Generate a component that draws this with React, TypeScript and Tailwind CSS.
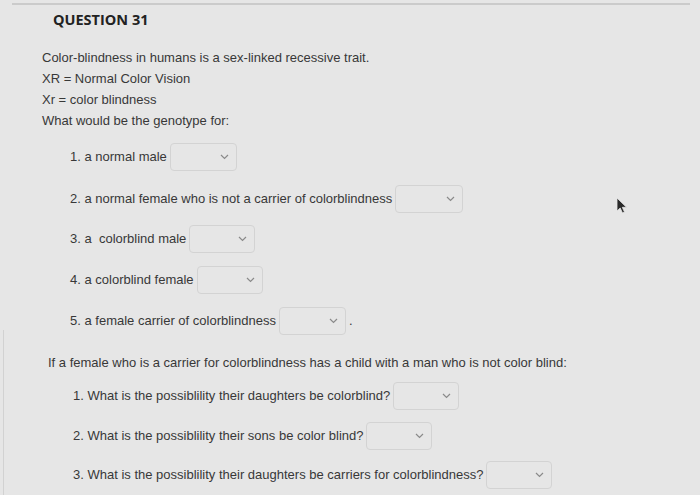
const bodyFont = { fontFamily: '"Liberation Sans", Arial, sans-serif' }

const Dropdown = ({ w = 67 }: { w?: number }) => (
  <span
    className="inline-flex h-[28px] items-center justify-end rounded-[4px] border border-[#d3d3d3] pr-[7px] align-middle"
    style={{ width: w }}>
    <svg width="9" height="6" viewBox="0 0 9 6" fill="none">
      <path d="M1 1l3.5 3.5L8 1" stroke="#8a8a8a" strokeWidth="1.2" />
    </svg>
  </span>
)

const Row = ({
  label,
  w,
  after,
  className
}: {
  label: string
  w?: number
  after?: string
  className: string
}) => (
  <div className={"flex items-center gap-[3px] " + className}>
    <span className="whitespace-pre">{label}</span>
    <Dropdown w={w} />
    {after && <span>{after}</span>}
  </div>
)

const App = () => {
  return (
    <div
      className="relative h-[495px] w-[700px] overflow-hidden bg-[#e6e6e6] text-[13px] text-[#383838]"
      style={bodyFont}>
      <div className="ml-[12px] mr-[10px] mt-[3px] h-[2px] bg-[#cbcbcb]" />
      <div className="absolute bottom-0 left-[3px] top-[330px] w-px bg-[#d2d2d2]" />

      <h1
        className="ml-[53px] mt-[4px] text-[14.5px] font-bold leading-[22px] text-[#222]"
        style={{ fontFamily: '"Open Sans", sans-serif' }}>
        QUESTION 31
      </h1>

      <div className="ml-[42px] mt-[16px] leading-[21px]">
        <p>Color-blindness in humans is a sex-linked recessive trait.</p>
        <p>XR = Normal Color Vision</p>
        <p>Xr = color blindness</p>
        <p>What would be the genotype for:</p>
      </div>

      <div className="ml-[70px]">
        <Row className="mt-[12px]" label="1. a normal male" />
        <Row
          className="mt-[14px]"
          label="2. a normal female who is not a carrier of colorblindness"
          w={68}
        />
        <Row className="mt-[12px]" label="3. a  colorblind male" w={66} />
        <Row className="mt-[13px]" label="4. a colorblind female" w={66} />
        <Row
          className="mt-[13px]"
          label="5. a female carrier of colorblindness"
          after="."
        />
      </div>

      <p className="ml-[48px] mt-[17px] leading-[21px]">
        If a female who is a carrier for colorblindness has a child with a man
        who is not color blind:
      </p>

      <div className="ml-[73px]">
        <Row
          className="mt-[9px]"
          label="1. What is the possiblility their daughters be colorblind?"
          w={66}
        />
        <Row
          className="mt-[12px]"
          label="2. What is the possiblility their sons be color blind?"
          w={66}
        />
        <Row
          className="mt-[11px]"
          label="3. What is the possiblility their daughters be carriers for colorblindness?"
          w={66}
        />
      </div>

      <svg
        className="absolute left-[616px] top-[197px]"
        width="12"
        height="18"
        viewBox="0 0 12 18">
        <path
          d="M1 1v13l3.2-3 2.3 5 2-0.9-2.2-4.8H10.5z"
          fill="#2a2a2a"
          stroke="#e6e6e6"
          strokeWidth="0.8"
        />
      </svg>
    </div>
  )
}

export default App
